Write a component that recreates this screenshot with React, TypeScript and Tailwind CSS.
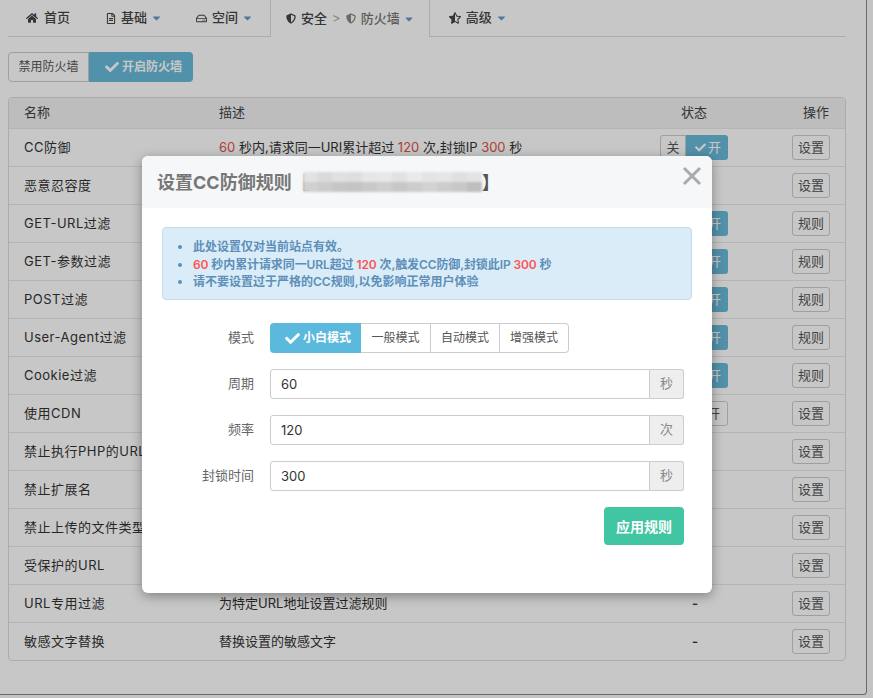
import { FaCaretDown, FaCheck, FaHome, FaRegFileAlt, FaRegHdd, FaShieldAlt, FaStarHalfAlt } from "react-icons/fa";

const font = "font-['Inter','Noto_Sans_CJK_SC',sans-serif]";

interface Row {
  name: string;
  desc?: React.ReactNode;
  on?: boolean | null;
  dash?: boolean;
  action: string;
}

const rows: Row[] = [
  {
    name: "CC防御",
    desc: (
      <>
        <b className="font-normal text-[#e0524d]">60</b> 秒内,请求同一URI累计超过{" "}
        <b className="font-normal text-[#e0524d]">120</b> 次,封锁IP{" "}
        <b className="font-normal text-[#e0524d]">300</b> 秒
      </>
    ),
    on: true,
    action: "设置",
  },
  { name: "恶意忍容度", action: "设置" },
  { name: "GET-URL过滤", on: true, action: "规则" },
  { name: "GET-参数过滤", on: true, action: "规则" },
  { name: "POST过滤", on: true, action: "规则" },
  { name: "User-Agent过滤", on: true, action: "规则" },
  { name: "Cookie过滤", on: true, action: "规则" },
  { name: "使用CDN", on: false, action: "设置" },
  { name: "禁止执行PHP的URL", action: "设置" },
  { name: "禁止扩展名", action: "设置" },
  { name: "禁止上传的文件类型", action: "设置" },
  { name: "受保护的URL", action: "设置" },
  { name: "URL专用过滤", desc: "为特定URL地址设置过滤规则", dash: true, action: "设置" },
  { name: "敏感文字替换", desc: "替换设置的敏感文字", dash: true, action: "设置" },
];

const mosaic = [
  "bg-[#e2e2e2]", "bg-[#dadada]", "bg-[#e0e0e0]", "bg-[#dedede]", "bg-[#e6e6e6]", "bg-[#e8e8e8]",
  "bg-[#e2e2e2]", "bg-[#eaeaea]", "bg-[#e4e4e4]", "bg-[#e6e6e6]", "bg-[#e0e0e0]", "bg-[#e4e4e4]",
  "bg-[#d0d0d0]", "bg-[#cbcbcb]", "bg-[#c6c6c6]", "bg-[#c4c4c4]", "bg-[#c9c9c9]", "bg-[#cecece]",
  "bg-[#c7c7c7]", "bg-[#cccccc]", "bg-[#d2d2d2]", "bg-[#cccccc]", "bg-[#c8c8c8]", "bg-[#bebebe]",
];

function Tab({ icon, label, caret = true, gap }: { icon: React.ReactNode; label: string; caret?: boolean; gap: string }) {
  return (
    <div className={`flex h-[36px] items-center gap-[5px] text-[#444] ${gap}`}>
      {icon}
      <span>{label}</span>
      {caret && <FaCaretDown className="h-[12px] w-[9px] text-[#6699cc]" />}
    </div>
  );
}

function Switch({ on }: { on: boolean }) {
  return (
    <div className="flex h-[25px] w-[68px]">
      <div className="flex w-[26px] items-center justify-center rounded-l-[3px] border border-[#ccc] text-[#555]">关</div>
      {on ? (
        <div className="flex flex-1 items-center gap-[2px] rounded-r-[3px] bg-[#68bad9] pl-[9px] text-white">
          <FaCheck className="h-[11px] w-[11px]" />开
        </div>
      ) : (
        <div className="flex flex-1 items-center justify-end rounded-r-[3px] border border-[#ccc] pr-[7px] text-[#555]">开</div>
      )}
    </div>
  );
}

function TableRow({ row }: { row: Row }) {
  return (
    <div className="flex h-[38px] items-center border-t border-[#e8e8e8] pl-[15px] text-[#333]">
      <div className="w-[195px] shrink-0 whitespace-nowrap tracking-[0.5px]">{row.name}</div>
      <div className="w-[441px] shrink-0 whitespace-nowrap">{row.desc}</div>
      <div className="flex w-[132px] shrink-0 items-center">
        {row.on != null && <Switch on={row.on} />}
        {row.dash && <span className="ml-[32px] font-semibold">-</span>}
      </div>
      <button className="h-[25px] w-[38px] rounded-[3px] border border-[#ccc] text-[#555]">{row.action}</button>
    </div>
  );
}

function Field({ label, value, unit }: { label: string; value: string; unit: string }) {
  return (
    <div className="flex h-[30px] items-center">
      <label className="w-[112px] text-right text-[#666]">{label}</label>
      <div className="ml-[16px] flex h-[30px] w-[414px]">
        <div className="flex flex-1 items-center rounded-l-[3px] border border-[#ccc] pt-[2px] pl-[10px] text-[#333]">{value}</div>
        <div className="flex w-[34px] items-center justify-center rounded-r-[3px] border border-l-0 border-[#ccc] bg-[#eee] text-[#888]">{unit}</div>
      </div>
    </div>
  );
}

export default function App() {
  return (
    <div className={`${font} relative h-[698px] w-[873px] overflow-hidden bg-[#fafafa] text-[13px]`}>
      <div className="h-[695px] w-[867px] rounded-br-[4px] border-r border-b border-[#888] bg-white pl-[8px] pr-[20px]">
        {/* Tabs */}
        <div className="flex h-[37px] border-b border-[#ddd] font-medium">
          <Tab gap="pl-[18px] pr-[18px]" icon={<FaHome className="mr-[1px] h-[12px] w-[12px]" />} label="首页" caret={false} />
          <Tab gap="pl-[18px] pr-[17px]" icon={<FaRegFileAlt className="h-[11px] w-[10px]" />} label="基础" />
          <Tab gap="pl-[18px] pr-[18px]" icon={<FaRegHdd className="h-[11px] w-[11px]" />} label="空间" />
          <div className="-mb-px flex h-[37px] items-center gap-[5px] border-x border-[#ddd] bg-white pr-[16px] pl-[15px] text-[#444]">
            <FaShieldAlt className="h-[11px] w-[10px]" />
            <span>安全</span>
            <span className="font-normal text-[#aaa]">&gt;</span>
            <FaShieldAlt className="h-[11px] w-[10px] text-[#888]" />
            <span className="text-[#777]">防火墙</span>
            <FaCaretDown className="h-[12px] w-[8px] text-[#6699cc]" />
          </div>
          <Tab gap="pl-[19px]" icon={<FaStarHalfAlt className="h-[12px] w-[12px]" />} label="高级" />
        </div>

        {/* Firewall toggle */}
        <div className="mt-[15px] flex h-[30px] text-[12px]">
          <button className="w-[81px] rounded-l-[4px] border border-[#ccc] text-[#555]">禁用防火墙</button>
          <button className="flex w-[104px] items-center gap-[3px] rounded-r-[4px] bg-[#68bad9] pl-[16px] font-semibold text-white">
            <FaCheck className="h-[14px] w-[14px]" />开启防火墙
          </button>
        </div>

        {/* Rules table */}
        <div className="mt-[15px] w-[838px] overflow-hidden rounded-[4px] border border-[#ddd]">
          <div className="flex h-[30px] items-center bg-[#f3f3f3] pl-[15px] text-[#444]">
            <div className="w-[195px]">名称</div>
            <div className="w-[462px]">描述</div>
            <div className="w-[122px]">状态</div>
            <div>操作</div>
          </div>
          {rows.map((row) => (
            <TableRow key={row.name} row={row} />
          ))}
        </div>
      </div>

      {/* Backdrop */}
      <div className="absolute inset-0 bg-black/[0.22]" />

      {/* Modal */}
      <div className="absolute top-[156px] left-[142px] h-[437px] w-[570px] overflow-hidden rounded-[6px] bg-white shadow-[0_3px_12px_rgba(0,0,0,0.35)]">
        <div className="relative flex h-[52px] items-center bg-[#f5f7f9] pl-[15px] text-[18px] font-bold text-[#777]">
          <span>设置CC防御规则</span>
          <div className="relative flex h-[20px] w-[208px] items-center justify-between text-[#555]">
            <span>【</span>
            <span>】</span>
            <div className="absolute top-0 left-[11px] grid h-[20px] w-[179px] grid-cols-12 rounded-[4px] blur-[1px]">
              {mosaic.map((c, i) => (
                <div key={i} className={c} />
              ))}
            </div>
          </div>
          <svg className="absolute top-[10px] right-[10px] h-[20px] w-[20px] text-[#aaa]" viewBox="0 0 20 20" fill="none" stroke="currentColor" strokeWidth="3">
            <path d="M2 2 L18 18 M18 2 L2 18" />
          </svg>
        </div>

        <div className="mx-[20px] mt-[19px] h-[73px] rounded-[4px] border border-[#c4dcec] bg-[#d9ecf8] pt-[10px] pl-[30px] text-[12px] leading-[17.5px] font-semibold text-[#5d8fb8]">
          <ul className="list-disc">
            <li>此处设置仅对当前站点有效。</li>
            <li className="tracking-[-0.1px]">
              <b className="font-semibold text-[#f55]">60</b> 秒内累计请求同一URL超过{" "}
              <b className="font-semibold text-[#f55]">120</b> 次,触发CC防御,封锁此IP{" "}
              <b className="font-semibold text-[#f55]">300</b> 秒
            </li>
            <li>请不要设置过于严格的CC规则,以免影响正常用户体验</li>
          </ul>
        </div>

        <div className="mt-[23px] flex flex-col gap-[16px]">
          <div className="flex h-[30px] items-center">
            <label className="w-[112px] text-right text-[#666]">模式</label>
            <div className="ml-[16px] flex h-[30px] text-[12px]">
              <button className="flex w-[91px] items-center gap-[3px] rounded-l-[4px] bg-[#5bb9dd] pl-[15px] font-semibold text-white">
                <FaCheck className="h-[15px] w-[15px]" />小白模式
              </button>
              <button className="w-[70px] border-y border-r border-[#ccc] text-[#555]">一般模式</button>
              <button className="w-[69px] border-y border-r border-[#ccc] text-[#555]">自动模式</button>
              <button className="w-[69px] rounded-r-[4px] border-y border-r border-[#ccc] text-[#555]">增强模式</button>
            </div>
          </div>
          <Field label="周期" value="60" unit="秒" />
          <Field label="频率" value="120" unit="次" />
          <Field label="封锁时间" value="300" unit="秒" />
        </div>

        <div className="mt-[16px] flex justify-end pr-[28px]">
          <button className="h-[38px] w-[80px] rounded-[4px] bg-[#42c5a2] text-[14px] font-bold text-white">应用规则</button>
        </div>
      </div>
    </div>
  );
}
